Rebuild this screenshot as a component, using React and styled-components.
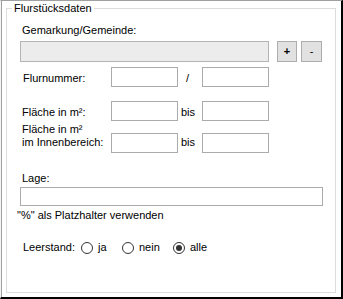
import React from 'react';
import styled, { createGlobalStyle } from 'styled-components';

const GlobalStyle = createGlobalStyle`
  html, body {
    margin: 0;
    padding: 0;
    background: #fff;
  }
  body {
    font-family: "Liberation Sans", Arial, sans-serif;
    font-size: 11px;
    line-height: 13px;
    color: #000;
  }
`;

const Frame = styled.div`
  box-sizing: border-box;
  width: 343px;
  height: 299px;
  padding: 1px 0 0 5px;
  border-top: 1px solid #a0a0a0;
  border-left: 1px solid #f4f4f4;
  border-right: 2px solid #000;
  border-bottom: 2px solid #000;
  box-shadow: inset 1px 0 0 #a0a0a0;
  background: #fff;
`;

const Group = styled.fieldset`
  box-sizing: border-box;
  width: 330px;
  height: 291px;
  margin: 0;
  padding: 0;
  min-inline-size: 0;
  border: 1px solid #dcdcdc;
`;

const Title = styled.legend`
  margin-left: 5px;
  padding: 0 2px;
  line-height: 13px;
`;

const Body = styled.div`
  display: flex;
  flex-direction: column;
  align-items: flex-start;
  padding-left: 13px;
`;

const Caption = styled.div`
  margin-top: ${(p) => p.$top}px;
  margin-left: ${(p) => p.$indent || 0}px;
  white-space: nowrap;
`;

const Row = styled.div`
  display: flex;
  align-items: flex-start;
  margin-top: ${(p) => p.$top}px;
`;

const Combo = styled.div`
  box-sizing: border-box;
  width: 249px;
  height: 21px;
  background: #ececec;
  border: 1px solid #b4b4b4;
`;

const SmallButton = styled.button`
  box-sizing: border-box;
  width: ${(p) => p.$w}px;
  height: 21px;
  margin: 0 0 0 ${(p) => p.$gap}px;
  padding: 0;
  font: ${(p) => (p.$bold ? 'bold' : 'normal')} 11px/13px "Liberation Sans", Arial, sans-serif;
  color: #000;
  background: #e1e1e1;
  border: 1px solid #adadad;
`;

const FieldLabel = styled.div`
  box-sizing: border-box;
  width: 91px;
  padding-left: ${(p) => p.$indent}px;
  padding-top: ${(p) => p.$pad}px;
  white-space: nowrap;
`;

const Box = styled.input`
  box-sizing: border-box;
  width: ${(p) => p.$w}px;
  height: ${(p) => p.$h}px;
  margin: ${(p) => p.$drop || 0}px 0 0 0;
  padding: 0 2px;
  font: inherit;
  background: #fff;
  border: 1px solid #ababab;
  outline: none;
`;

const Between = styled.div`
  box-sizing: border-box;
  width: 24px;
  padding-left: ${(p) => p.$indent}px;
  padding-top: ${(p) => p.$pad}px;
`;

const RadioRow = styled.div`
  display: flex;
  align-items: center;
  height: 13px;
  margin-top: ${(p) => p.$top}px;
`;

const RadioLabel = styled.div`
  box-sizing: border-box;
  width: 61px;
  padding-left: 3px;
`;

const Option = styled.label`
  display: flex;
  align-items: center;
  gap: 5px;
  width: ${(p) => p.$w}px;
`;

const Dot = styled.span`
  box-sizing: border-box;
  display: flex;
  align-items: center;
  justify-content: center;
  width: 12px;
  height: 12px;
  border: 1px solid #333;
  border-radius: 50%;
  background: #fff;

  &::after {
    content: '';
    display: ${(p) => (p.$on ? 'block' : 'none')};
    width: 6px;
    height: 6px;
    border-radius: 50%;
    background: #333;
  }
`;

const options = [
  { text: 'ja', w: 41 },
  { text: 'nein', w: 51 },
  { text: 'alle', w: 40, on: true },
];

export default function App() {
  return (
    <>
      <GlobalStyle />
      <Frame>
        <Group>
          <Title>Flurstücksdaten</Title>
          <Body>
            <Caption $top={9} $indent={2}>Gemarkung/Gemeinde:</Caption>
            <Row $top={4}>
              <Combo />
              <SmallButton $w={20} $gap={8} $bold>+</SmallButton>
              <SmallButton $w={21} $gap={4}>-</SmallButton>
            </Row>

            <Row $top={5}>
              <FieldLabel $indent={3} $pad={5}>Flurnummer:</FieldLabel>
              <Box $w={67} $h={20} />
              <Between $indent={8} $pad={5}>/</Between>
              <Box $w={67} $h={20} />
            </Row>

            <Row $top={14}>
              <FieldLabel $indent={2} $pad={5}>Fläche in m²:</FieldLabel>
              <Box $w={67} $h={20} />
              <Between $indent={3} $pad={5}>bis</Between>
              <Box $w={67} $h={20} />
            </Row>

            <Row $top={2}>
              <FieldLabel $indent={2} $pad={0}>
                Fläche in m²
                <br />
                im Innenbereich:
              </FieldLabel>
              <Box $w={67} $h={20} $drop={10} />
              <Between $indent={3} $pad={13}>bis</Between>
              <Box $w={67} $h={20} $drop={10} />
            </Row>

            <Caption $top={19} $indent={2}>Lage:</Caption>
            <Row $top={2}>
              <Box $w={303} $h={19} />
            </Row>
            <Caption $top={3} $indent={-3}>"%" als Platzhalter verwenden</Caption>

            <RadioRow $top={19}>
              <RadioLabel>Leerstand:</RadioLabel>
              {options.map((o) => (
                <Option key={o.text} $w={o.w}>
                  <Dot $on={o.on} />
                  {o.text}
                </Option>
              ))}
            </RadioRow>
          </Body>
        </Group>
      </Frame>
    </>
  );
}
